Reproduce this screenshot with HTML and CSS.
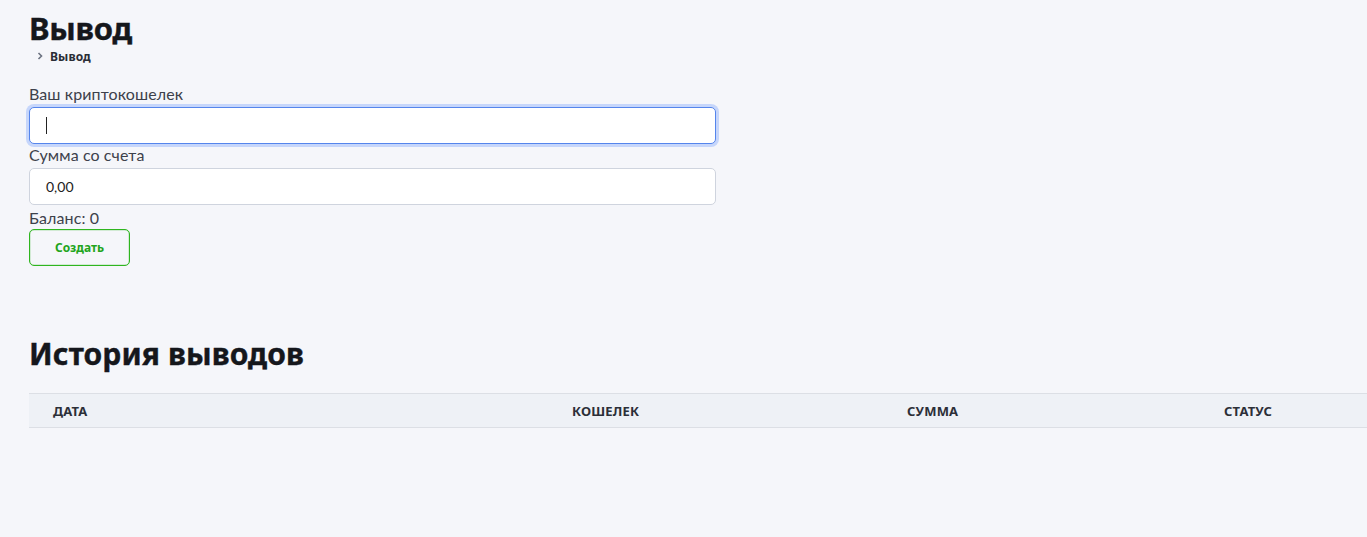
FILE: index.html
```html
<!DOCTYPE html>
<html lang="ru">
<head>
<meta charset="utf-8">
<title>Вывод</title>
<link rel="stylesheet" href="styles.css">
</head>
<body>
<div class="page">
  <h1 class="title">Вывод</h1>
  <nav class="crumbs">
    <svg class="chev" width="6" height="8" viewBox="0 0 6 8"><path d="M1.5 1 L4.5 4 L1.5 7" fill="none" stroke="#6b7280" stroke-width="1.6"/></svg>
    <span>Вывод</span>
  </nav>
  <form class="form">
    <label class="lbl">Ваш криптокошелек</label>
    <div class="input focus"><span class="caret"></span></div>
    <label class="lbl">Сумма со счета</label>
    <div class="input"><span class="val">0,00</span></div>
    <div class="lbl">Баланс: 0</div>
    <div class="btn" role="button">Создать</div>
  </form>
  <h2 class="title2">История выводов</h2>
  <div class="thead">
    <div class="th c1">Дата</div>
    <div class="th c2">Кошелек</div>
    <div class="th c3">Сумма</div>
    <div class="th c4">Статус</div>
  </div>
</div>
</body>
</html>
```
FILE: styles.css
```css
* { box-sizing: border-box; }
html, body { margin: 0; padding: 0; background: #f5f6fa; }
body { font-family: "Lato", "Noto Sans", sans-serif; color: #3b3f4a; overflow: hidden; }
.page { padding: 10px 0 0 29px; }
.title { margin: 0; font-family: "Noto Sans", sans-serif; font-weight: 700; font-size: 31px; line-height: 36px; color: #15171c; letter-spacing: -0.2px; -webkit-text-stroke: 0.4px #15171c; }
.crumbs { display: flex; align-items: center; gap: 7px; margin: 2px 0 0 8px; height: 16px; font-family: "Noto Sans", sans-serif; font-size: 12px; font-weight: 700; color: #2a2d35; letter-spacing: 0.1px; }
.chev { display: block; }
.form { display: flex; flex-direction: column; align-items: flex-start; margin-top: 21px; width: 687px; }
.lbl { font-size: 16px; line-height: 18px; color: #3d414b; letter-spacing: 0.1px; }
.input { width: 687px; height: 37px; background: #fff; border: 1px solid #cfd4de; border-radius: 5px; display: flex; align-items: center; padding-left: 16px; margin: 4px 0 4px; }
.input.focus { border-color: #5585ec; box-shadow: 0 0 0 3px #c6d6fb; margin-bottom: 2px; }
.caret { width: 1px; height: 17px; background: #222; margin-left: 0; }
.val { font-size: 14px; color: #222; }
.btn { margin-top: 2px; width: 101px; height: 37px; display: flex; align-items: center; justify-content: center; background: transparent; border: 1px solid #2fb51f; box-shadow: inset 0 0 0 0.5px rgba(47,181,31,0.35); border-radius: 5px; color: #22a51c; font-family: "Noto Sans", sans-serif; font-weight: 700; font-size: 12px; cursor: pointer; }
.title2 { margin: 70px 0 0; font-family: "Noto Sans", sans-serif; font-weight: 700; font-size: 30px; line-height: 36px; color: #15171c; letter-spacing: 0.1px; -webkit-text-stroke: 0.4px #15171c; }
.thead { display: grid; grid-template-columns: 519px 335px 317px 1fr; margin-top: 21px; height: 35px; align-items: center; background: #eef1f6; border-top: 1px solid #dcdfe5; border-bottom: 1px solid #dcdfe5; }
.th { padding-left: 24px; font-family: "Noto Sans", sans-serif; font-weight: 700; font-size: 13px; text-transform: uppercase; color: #2c2f38; letter-spacing: 0.2px; }
```
